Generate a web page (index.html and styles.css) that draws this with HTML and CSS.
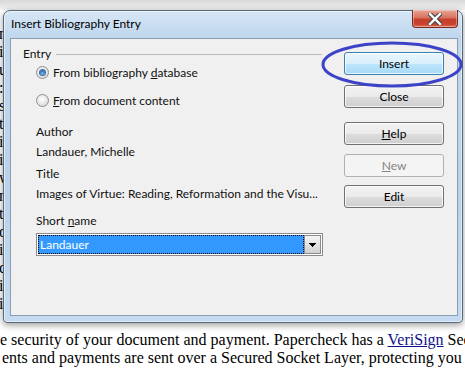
FILE: index.html
```html
<!DOCTYPE html>
<html lang="en">
<head>
	<meta charset="UTF-8">
	<meta name="viewport" content="width=device-width, initial-scale=1.0">
	<title>Insert Bibliography Entry</title>
	<link rel="stylesheet" href="styles.css">
</head>
<body>
	<div class="doc">
		<p class="line"></p>
		<p class="line">ntil the paper is returned to you.</p>
		<p class="line">is is the place to start your order.</p>
		<p class="line">ust the editing level you need.</p>
		<p class="line">: our editors will review it fast.</p>
		<p class="line">s are handled by trained staff.</p>
		<p class="line">t is saved and backed up daily.</p>
		<p class="line">in every order we receive.</p>
		<p class="line">is always kept private.</p>
		<p class="line">w it is done for you.</p>
		<p class="line">nly the editor sees it.</p>
		<p class="line">t is deleted after review.</p>
		<p class="line">o one else can read it.</p>
		<p class="line">is secure from the start.</p>
		<p class="line">checked before return.</p>
		<p class="line">is part of the service.</p>
		<p class="line">in the final document.</p>
		<p class="line"></p>
		<p class="line first">he security of your document and payment. <span class="misspelled">Papercheck</span> has a <a href="#">VeriSign</a> Secured Seal</p>
		<p class="line second">ents and payments are sent over a Secured Socket Layer, protecting you</p>
	</div>

	<div class="window">
		<div class="titlebar">
			<span class="title">Insert Bibliography Entry</span>
			<button class="close-btn" type="button">
				<svg width="14" height="12" viewBox="0 0 14 12">
					<path d="M2 1 L12 11 M12 1 L2 11" stroke="#4a4a4a" stroke-width="4.6" stroke-linecap="square"/>
					<path d="M2 1 L12 11 M12 1 L2 11" stroke="#ffffff" stroke-width="2.4" stroke-linecap="square"/>
				</svg>
			</button>
		</div>

		<div class="client">
			<div class="entry-panel">
				<div class="group-title">
					<span>Entry</span>
					<span class="group-line"></span>
				</div>
				<label class="radio radio-first"><span class="radio-dot checked"></span><span>From bibliography <u>d</u>atabase</span></label>
				<label class="radio radio-second"><span class="radio-dot"></span><span><u>F</u>rom document content</span></label>

				<div class="field-label author">Author</div>
				<div class="field-value">Landauer, Michelle</div>
				<div class="field-label title-label">Title</div>
				<div class="field-value">Images of Virtue: Reading, Reformation and the Visu...</div>
				<div class="field-label short-label">Short <u>n</u>ame</div>

				<div class="combo">
					<div class="combo-text">Landauer</div>
					<div class="combo-btn">
						<svg width="7" height="4" viewBox="0 0 7 4">
							<path d="M0 0 H7 V1 H6 V2 H5 V3 H4 V4 H3 V3 H2 V2 H1 V1 H0 Z" fill="#000"/>
						</svg>
					</div>
				</div>
			</div>

			<div class="buttons">
				<button class="btn btn-default" type="button">Insert</button>
				<button class="btn btn-close" type="button">Close</button>
				<button class="btn btn-help" type="button"><u>H</u>elp</button>
				<button class="btn btn-new" type="button" disabled><u>N</u>ew</button>
				<button class="btn btn-edit" type="button">Edit</button>
			</div>
		</div>
	</div>

	<svg class="annotation" width="465" height="370" viewBox="0 0 465 370">
		<ellipse cx="392" cy="64.5" rx="69" ry="21.5" fill="none" stroke="#3d43c6" stroke-width="3"/>
	</svg>
</body>
</html>
```

FILE: styles.css
```css
body {
	margin: 0;
	width: 465px;
	height: 370px;
	overflow: hidden;
	position: relative;
	background: linear-gradient(180deg, #d8d8d8 0, #f2f2f2 10px, #ffffff 10px);
	font-family: Lato, "Open Sans", sans-serif;
	font-size: 12px;
	color: #111;
}

/* документ под окном */
.doc {
	padding-top: 7px;
	font-family: "Liberation Serif", "Times New Roman", serif;
	font-size: 16px;
	color: #000;
}

.line {
	margin: 0;
	height: 18px;
	line-height: 18px;
	white-space: nowrap;
	text-indent: -1px;
	overflow: hidden;
}

.line.first {
	text-indent: -8px;
}

.line.second {
	text-indent: 2px;
}

.misspelled {
	text-decoration: underline wavy #e02020;
	text-decoration-thickness: 1px;
	text-underline-offset: 3px;
}

.doc a {
	color: #10108a;
	text-decoration: underline;
}

/* окно диалога */
.window {
	position: absolute;
	left: 3px;
	top: 10px;
	width: 460px;
	height: 313px;
	box-sizing: border-box;
	border: 1px solid #56687a;
	border-radius: 7px 7px 4px 4px;
	padding: 0 4px 6px 6px;
	background: linear-gradient(180deg, #d6e6f6 0, #bfd6ed 27px, #b9d2eb 60%, #c4daf0 100%);
	box-shadow: 0 2px 7px rgba(0, 0, 0, 0.4), inset 0 0 0 1px rgba(255, 255, 255, 0.55);
	display: flex;
	flex-direction: column;
}

.titlebar {
	height: 27px;
	display: flex;
	align-items: flex-start;
	flex-shrink: 0;
}

.title {
	padding: 5px 0 0 1px;
	line-height: 15px;
	color: #000;
}

.close-btn {
	margin-left: auto;
	width: 46px;
	height: 18px;
	margin-top: -1px;
	border: 1px solid #7a2a1e;
	border-top: none;
	border-radius: 0 0 4px 4px;
	background: linear-gradient(180deg, #e8a495 0, #d8735f 45%, #c4402b 55%, #c9442e 85%, #e07a5c 100%);
	box-shadow: inset 0 0 0 1px rgba(255, 255, 255, 0.35);
	padding: 0;
	display: flex;
	align-items: center;
	justify-content: center;
}

.client {
	flex: 1;
	border: 1px solid #8a9db2;
	background: #f0f0f0;
	display: flex;
	padding: 7px 0 0 12px;
}

.entry-panel {
	width: 299px;
	flex-shrink: 0;
}

.group-title {
	display: flex;
	align-items: center;
	height: 15px;
	line-height: 15px;
}

.group-line {
	flex: 1;
	height: 1px;
	margin-left: 5px;
	margin-top: 1px;
	background: #b8bcc0;
}

.radio {
	display: flex;
	align-items: center;
	height: 15px;
	line-height: 15px;
	margin-left: 13px;
	white-space: nowrap;
}

.radio-first {
	margin-top: 4px;
}

.radio-second {
	margin-top: 13px;
}

.radio-dot {
	width: 13px;
	height: 13px;
	flex-shrink: 0;
	box-sizing: border-box;
	border-radius: 50%;
	border: 1px solid #8c8f92;
	background: radial-gradient(circle at 45% 40%, #ffffff 0, #e6e6e6 55%, #c9c9c9 100%);
	margin-right: 4px;
	display: flex;
	align-items: center;
	justify-content: center;
}

.radio-dot.checked::after {
	content: '';
	width: 5px;
	height: 5px;
	border-radius: 50%;
	background: radial-gradient(circle at 50% 65%, #7cc4f5 0, #2a6db8 60%, #123d75 100%);
	box-shadow: 0 0 0 1px #3f6e9c;
}

.field-label,
.field-value {
	margin-left: 13px;
	line-height: 15px;
	height: 15px;
	white-space: nowrap;
}

.author {
	margin-top: 16px;
}

.field-value {
	margin-top: 5px;
}

.title-label {
	margin-top: 7px;
}

.short-label {
	margin-top: 12px;
}

.combo {
	margin: 5px 0 0 13px;
	width: 287px;
	height: 23px;
	box-sizing: border-box;
	border: 1px solid #8a8a8a;
	padding: 1px;
	background: #ffffff;
	display: flex;
}

.combo-text {
	flex: 1;
	border: 1px dotted #000;
	background: #3399ff;
	color: #ffffff;
	padding-left: 1px;
	line-height: 17px;
}

.combo-btn {
	width: 17px;
	box-sizing: border-box;
	border: 1px solid #8a8a8a;
	background: linear-gradient(180deg, #f4f4f4 0, #e2e2e2 50%, #d2d2d2 100%);
	display: flex;
	align-items: center;
	justify-content: center;
}

/* кнопки справа */
.buttons {
	margin-left: 22px;
	padding-top: 6px;
	display: flex;
	flex-direction: column;
}

.btn {
	width: 100px;
	height: 23px;
	padding: 0;
	font-family: Lato, "Open Sans", sans-serif;
	font-size: 12px;
	color: #000;
	border: 1px solid #707070;
	border-radius: 3px;
	background: linear-gradient(180deg, #f2f2f2 0, #ebebeb 50%, #dddddd 51%, #cfcfcf 100%);
	box-shadow: inset 0 0 0 1px rgba(255, 255, 255, 0.75);
}

.btn-default {
	border-color: #3c7fb1;
	background: linear-gradient(180deg, #eaf6fd 0, #d9f0fc 50%, #bee6fd 51%, #a7d9f5 100%);
}

.btn-close {
	margin-top: 10px;
}

.btn-help {
	margin-top: 14px;
}

.btn-new {
	margin-top: 9px;
	border-color: #adb2b5;
	background: #f4f4f4;
	color: #838383;
	box-shadow: none;
}

.btn-edit {
	margin-top: 8px;
}

.annotation {
	position: absolute;
	left: 0;
	top: 0;
	pointer-events: none;
}
```
